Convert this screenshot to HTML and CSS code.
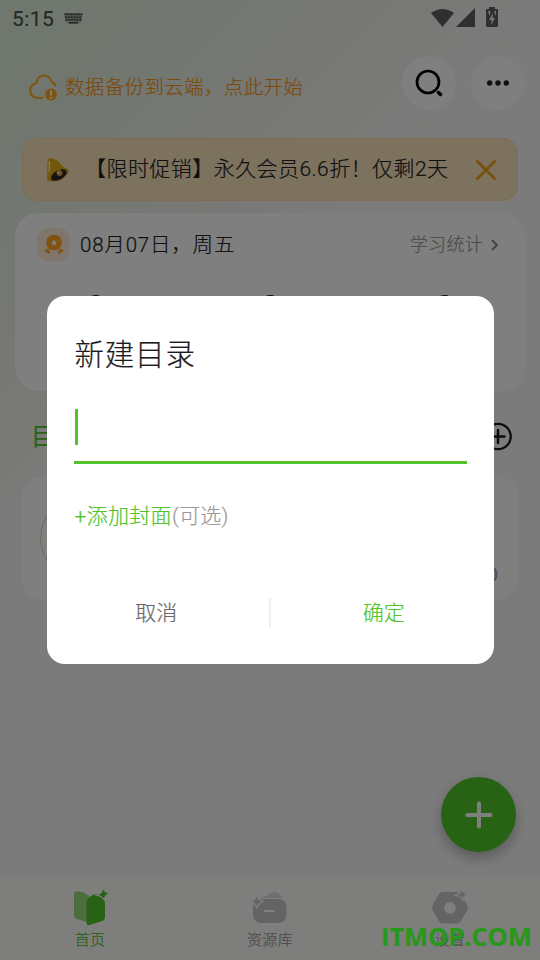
FILE: index.html
```html
<!DOCTYPE html>
<html lang="zh-CN">
<head>
<meta charset="utf-8">
<title>首页</title>
<link rel="stylesheet" href="styles.css">
</head>
<body>
<div class="app">
  <div class="status">
    <span class="clock">5:15</span>
    <svg class="keyboard" width="19" height="11" viewBox="0 0 19 11">
      <path d="M.5 0h18l-.8 8.500h-16.400Z" fill="#9da29a"/>
      <path d="M.5 1.300h18M1 4.200h17M1.500 7h16" fill="none" stroke="#4a4a4a" stroke-width="1.600" stroke-dasharray="1.800 1"/>
      <path d="M4.500 9.800h10" stroke="#4a4a4a" stroke-width="1.600"/>
    </svg>
    <svg class="signals" width="68" height="22" viewBox="0 0 68 22" fill="#5f5f5f">
      <path d="M0 6Q11.500-2 23 6L11.500 20Z"/>
      <path d="M44 1v19H25Z"/>
      <path d="M58 0h6v2h2q1 0 1 1v16q0 1-1 1H56q-1 0-1-1V3q0-1 1-1h2Z"/>
      <path d="M62 6l-4 7h2.500l-.5 5 4-7h-2.500ZM57 4h2.500l-1 5ZM63 4h2v5Z" fill="#f0f0f0"/>
    </svg>
  </div>
  <header class="header">
    <svg class="cloud" width="29" height="27" viewBox="0 0 29 27">
      <path d="M14 24H9.500C4.500 24 1.200 20.800 1.200 16.500c0-4 2.400-6.700 6-7.300C8 4.500 11 1.500 15 1.500c4.200 0 6.500 2.600 7.500 6.300 2.500.8 3.700 2.500 4.200 4.500" fill="none" stroke="#ffa81f" stroke-width="2.100"/>
      <circle cx="22" cy="20.500" r="6" fill="#ffa81f"/>
      <path d="M22 16.500v5M22 23v1.700" stroke="#fff" stroke-width="2"/>
    </svg>
    <span class="backup">数据备份到云端，点此开始</span>
    <span class="round">
      <svg width="54" height="54" viewBox="0 0 54 54" fill="none" stroke="#000">
        <circle cx="26" cy="26" r="11" stroke-width="2.700"/>
        <path d="M36.500 36.500l2 2" stroke-width="3.500" stroke-linecap="round"/>
      </svg>
    </span>
    <span class="round">
      <svg width="54" height="54" viewBox="0 0 54 54" fill="#222">
        <circle cx="18.700" cy="27" r="2.700"/><circle cx="27" cy="27" r="2.700"/><circle cx="35.300" cy="27" r="2.700"/>
      </svg>
    </span>
  </header>
  <section class="promo">
    <svg class="bell" width="23" height="25" viewBox="0 0 23 25">
      <path d="M2 2.500Q3.500 0 6 1.500C14 3 14 8 18.500 10.500Q24 12 22 16.500 16 25 6 24.500 1 24.500 1 21C2 15 .5 8 2 2.500Z" fill="#e5ac13"/>
      <path d="M3.200 4Q4 10 3 15" fill="none" stroke="#fff3c0" stroke-width="1.500"/>
      <ellipse cx="12.800" cy="18" rx="8.700" ry="4.600" transform="rotate(-29 12.800 18)" fill="#292929"/>
      <circle cx="13.500" cy="16" r="3" fill="#d9a23a"/><circle cx="12.500" cy="15.500" r="1.200" fill="#fff0a8"/>
    </svg>
    <span class="promo-text">【限时促销】永久会员6.6折！仅剩2天</span>
    <svg class="close" width="22" height="22" viewBox="0 0 22 22"><path d="M1.500 1.500l19 19M20.500 1.500l-19 19" stroke="#eda51c" stroke-width="3"/></svg>
  </section>
  <section class="stats">
    <div class="stats-head">
      <span class="medal">
        <svg width="33" height="33" viewBox="0 0 33 33">
          <path d="M13.500 19L9.500 23.500M20.500 19l4 4.500" stroke="#ffa51f" stroke-width="2.600"/>
          <path d="M8 22l5 3M26 22l-5 3" stroke="#ffa51f" stroke-width="2.500"/>
          <circle cx="17" cy="14.500" r="8.300" fill="#ffa51f" stroke="#ffead5" stroke-width="1"/>
          <path d="M17 11.500l1 2 2.200.2-1.600 1.500.5 2.300-2.100-1.200-2.100 1.200.5-2.300-1.600-1.500 2.200-.2Z" fill="#fff"/>
        </svg>
      </span>
      <span class="date">08月07日，周五</span>
      <span class="stat-link">学习统计</span>
      <svg width="8" height="12" viewBox="0 0 8 12"><path d="M1 1l5 5-5 5" fill="none" stroke="#888" stroke-width="2"/></svg>
    </div>
    <div class="figures"><span>0</span><span>0</span><span>0</span></div>
  </section>
  <div class="section-head">
    <span>目录</span>
    <svg width="29" height="29" viewBox="0 0 29 29" fill="none" stroke="#181818"><circle cx="14" cy="14.500" r="12.700" stroke-width="2.300"/><path d="M8 14.500h12.500M14 8v13" stroke-width="2.500" stroke-linecap="round"/></svg>
  </div>
  <section class="folder"><span class="ring"></span><span class="count">0/0</span></section>
  <div class="fab">
    <svg width="28" height="28" viewBox="0 0 28 28"><path d="M2.500 14h23M14 2.500v23" stroke="#fff" stroke-width="4" stroke-linecap="round"/></svg>
  </div>
  <nav class="tabs">
    <div class="tab active">
      <svg width="36" height="36" viewBox="0 0 36 36">
        <path d="M2 4Q2 1 5 1.200C11 1.500 14 3 17 6.500L15 32 5 29Q2 28 2 25Z" fill="#99da7d"/>
        <path d="M14.500 13C14.500 8 20 4 26 4q7 0 7 5v18q0 3-3 4l-12 4q-3.500.7-3.500-2Z" fill="#50c428"/>
        <path d="M31-.5q1.500 3 5 4-3.500 1.500-4 5-2-3-5.500-3.500 4-2 4.500-5.500Z" fill="#50c428" stroke="#fdfdf9" stroke-width="2.400" paint-order="stroke"/>
      </svg><span>首页</span>
    </div>
    <div class="tab">
      <svg width="36" height="36" viewBox="0 0 36 36">
        <path d="M9 8Q16 5 19 3q7-3 12 5Z" fill="#dedede"/>
        <rect x="1" y="9" width="33.500" height="24" rx="8" fill="#c8c8c8"/>
        <path d="M13 21h9" stroke="#fff" stroke-width="2.200" stroke-linecap="round"/>
        <path d="M4.500 7q1.500 3.500 5 4.500-3.500 1.500-4.500 5-1.500-3.500-4.500-4.500 3-1.500 4-5Z" fill="#c8c8c8" stroke="#fdfdf9" stroke-width="2.400" paint-order="stroke"/>
      </svg><span>资源库</span>
    </div>
    <div class="tab">
      <svg width="36" height="36" viewBox="0 0 36 36">
        <path d="M11 2h14q3 0 4.500 3l5.500 9.500q1.500 3 0 6L29.500 30q-2 3.500-4.500 3.500H11Q8 33.500 6 30L1 20.500q-1.500-3 0-6L6.500 5Q8 2 11 2Z" fill="#c8c8c8"/>
        <circle cx="18" cy="17.800" r="5.800" fill="#fdfdf9"/>
        <path d="M29.500.5q1.500 3 5 3.500-3.500 1.500-4 4.500-1.500-3-5-3.500 3.500-1.500 4-4.500Z" fill="#c8c8c8" stroke="#fdfdf9" stroke-width="2.400" paint-order="stroke"/>
      </svg><span>设置</span>
    </div>
  </nav>
</div>
<div class="scrim">
  <div class="dialog">
    <h1>新建目录</h1>
    <div class="field"><span class="caret"></span></div>
    <div class="cover">+添加封面<span>(可选)</span></div>
    <div class="actions"><span class="cancel">取消</span><i></i><span class="ok">确定</span></div>
  </div>
</div>
<div class="watermark">ITMOP.COM</div>
</body>
</html>
```

FILE: styles.css
```css
* { box-sizing: border-box; }
body { margin: 0; width: 540px; height: 960px; overflow: hidden; position: relative; font-family: Roboto, "Noto Sans CJK SC", sans-serif; font-weight: 300; -webkit-text-stroke: .2px currentColor; }
svg { display: block; flex: none; overflow: visible; }
span { white-space: nowrap; }
.app { width: 540px; height: 960px; display: flex; flex-direction: column; background: linear-gradient(135deg, #e0f0dc 0%, #e2eedf 10%, #f0f0eb 27%, #f7f6f5 36%, #f7f7f7 46%); }
.status { height: 38px; flex: none; display: flex; align-items: center; padding-left: 12px; }
.clock { font-size: 21px; font-weight: 400; color: #4c514a; letter-spacing: .4px; width: 52px; line-height: 38px; }
.keyboard { margin-top: -2px; }
.signals { margin: -3px 41px 0 auto; }
.header { height: 89px; flex: none; display: flex; align-items: center; padding: 0 15px 0 29px; }
.cloud { margin-top: 10px; }
.backup { margin: 6px auto 0 7px; font-size: 19.500px; letter-spacing: .35px; color: #f79616; }
.round { width: 54px; height: 54px; border-radius: 50%; background: #fff; margin-left: 15px; }
.promo { height: 63px; margin: 11px 22px 0; flex: none; border: 1.500px solid #f9dba6; border-radius: 15px; background: #f8e4bd; display: flex; align-items: center; padding: 0 20px 0 23px; }
.promo-text { margin: -5px auto 0 16px; font-size: 21px; letter-spacing: .45px; color: #222; }
.stats { height: 178px; flex: none; margin: 12px 15px 0; border-radius: 24px; background: #fff; }
.stats-head { height: 63px; display: flex; align-items: center; padding: 0 26px 0 22px; }
.medal { width: 33px; height: 33px; border-radius: 12px; background: #ffead5; }
.date { font-size: 20.500px; letter-spacing: .8px; color: #222; margin: -3px auto 0 10px; }
.stat-link { font-size: 18px; letter-spacing: .3px; color: #999; margin: -3px 8px 0 0; }
.figures { display: flex; justify-content: center; padding: 10px 0 0; font-size: 28px; line-height: 40px; color: #222; font-weight: 400; }
.figures span { width: 174.500px; flex: none; text-align: center; }
.section-head { height: 85px; flex: none; display: flex; align-items: center; justify-content: space-between; padding: 6px 27px 0 31px; font-size: 24px; font-weight: 400; color: #50c428; }
.section-head span { margin-top: -4px; }
.folder { height: 124px; flex: none; margin: 0 21px; border-radius: 24px; background: #fff; display: flex; align-items: center; justify-content: space-between; padding: 0 21px 0 19px; }
.ring { width: 84px; height: 84px; border: 1px solid #bfe6b0; border-radius: 50%; }
.count { font-size: 18px; color: #999; margin-top: 72px; font-weight: 400; }
.fab { position: absolute; left: 441px; top: 777px; width: 75px; height: 75px; border-radius: 50%; background: #50c428; display: flex; align-items: center; justify-content: center; box-shadow: 0 7px 12px rgba(0,0,0,.2), 0 2px 20px rgba(0,0,0,.08); }
.tabs { height: 84px; flex: none; margin-top: auto; background: #fdfdf9; display: flex; }
.tab { flex: 1; display: flex; flex-direction: column; align-items: center; padding-top: 14px; font-size: 15px; line-height: 22px; letter-spacing: .3px; color: #999; }
.tab span { margin-top: 3px; }
.tab.active { color: #50c428; }
.scrim { position: absolute; inset: 0; background: rgba(0,0,0,.5); display: flex; align-items: center; justify-content: center; }
.dialog { width: 447px; height: 368px; border-radius: 18px; background: #fff; padding: 38px 27px 0 27px; display: flex; flex-direction: column; }
h1 { margin: 0; padding-left: 1px; font-size: 29.500px; line-height: 42px; font-weight: 300; letter-spacing: .8px; color: #1c1b20; }
.field { height: 88px; flex: none; border-bottom: 3px solid #50c428; padding: 33px 0 0 1px; }
.caret { display: block; width: 3px; height: 36px; background: #50c428; }
.cover { margin-top: 36px; padding-left: 1px; font-size: 21px; line-height: 32px; letter-spacing: .3px; color: #50c428; }
.cover span { color: #999; }
.actions { display: flex; align-items: center; height: 32px; margin: 65px -27px 0 -27px; font-size: 21px; }
.actions span { flex: 1; text-align: center; margin-top: -4px; }
.actions i { width: 2px; height: 30px; background: #f0f0f0; }
.cancel { color: #666; padding-right: 3px; }
.ok { color: #50c428; padding-left: 3px; }
.watermark { position: absolute; left: 381px; top: 918px; font: 700 25.400px/36px "Open Sans", sans-serif; color: #27981a; }
```
